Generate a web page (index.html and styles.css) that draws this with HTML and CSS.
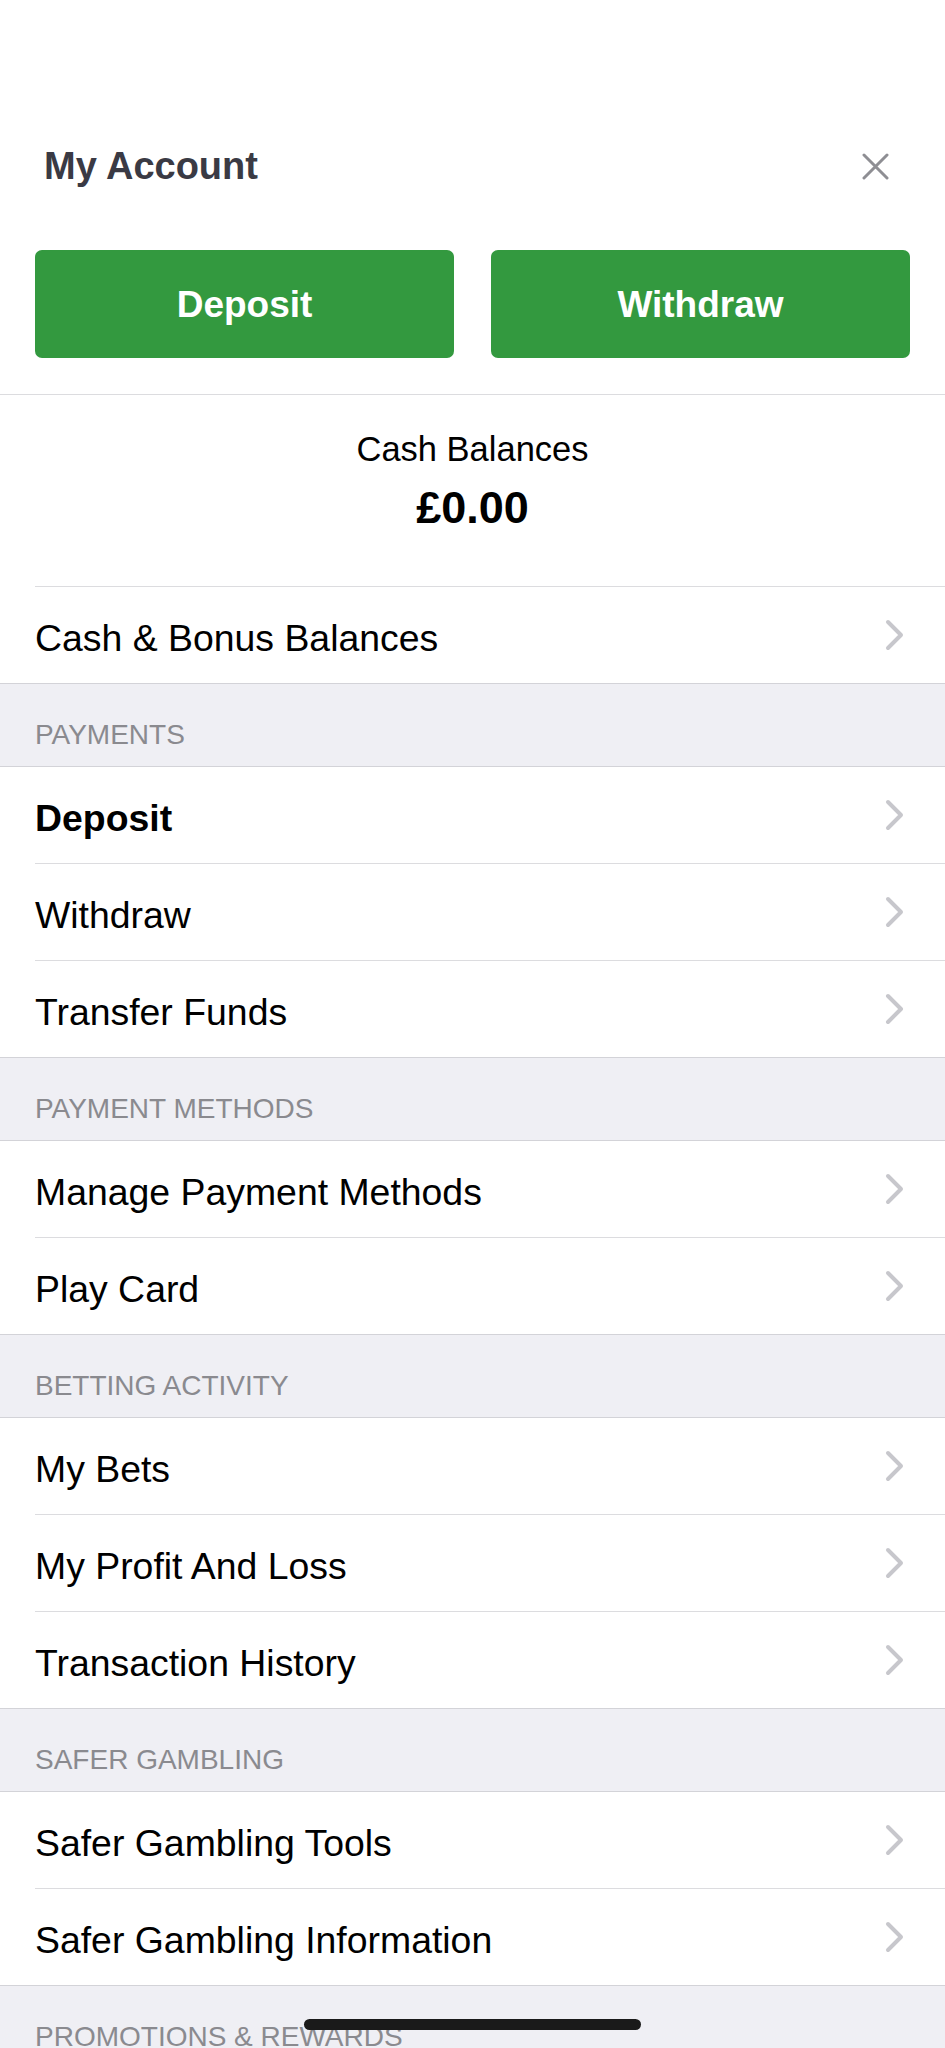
FILE: index.html
```html
<!DOCTYPE html>
<html lang="en">
<head>
<meta charset="utf-8">
<title>My Account</title>
<link rel="stylesheet" href="styles.css">
</head>
<body>
<div class="screen">
  <header class="top">
    <h1 class="title">My Account</h1>
    <svg class="close" width="27" height="27" viewBox="0 0 27 27" aria-label="Close"><path d="M2 2 L25 25 M25 2 L2 25" stroke="#8e8e93" stroke-width="3" stroke-linecap="round" fill="none"/></svg>
  </header>
  <div class="actions">
    <button class="btn">Deposit</button>
    <button class="btn">Withdraw</button>
  </div>
  <section class="balance">
    <div class="balance-label">Cash Balances</div>
    <div class="balance-value">£0.00</div>
  </section>
  <div class="item item-top"><span>Cash &amp; Bonus Balances</span><svg class="chev" width="20" height="32" viewBox="0 0 20 32"><path d="M3 3 L16 16 L3 29" stroke="#c7c7cc" stroke-width="4" stroke-linecap="round" stroke-linejoin="round" fill="none"/></svg></div>

  <div class="section">PAYMENTS</div>
  <div class="item"><span class="strong">Deposit</span><svg class="chev" width="20" height="32" viewBox="0 0 20 32"><path d="M3 3 L16 16 L3 29" stroke="#c7c7cc" stroke-width="4" stroke-linecap="round" stroke-linejoin="round" fill="none"/></svg></div>
  <div class="item"><span>Withdraw</span><svg class="chev" width="20" height="32" viewBox="0 0 20 32"><path d="M3 3 L16 16 L3 29" stroke="#c7c7cc" stroke-width="4" stroke-linecap="round" stroke-linejoin="round" fill="none"/></svg></div>
  <div class="item"><span>Transfer Funds</span><svg class="chev" width="20" height="32" viewBox="0 0 20 32"><path d="M3 3 L16 16 L3 29" stroke="#c7c7cc" stroke-width="4" stroke-linecap="round" stroke-linejoin="round" fill="none"/></svg></div>

  <div class="section">PAYMENT METHODS</div>
  <div class="item"><span>Manage Payment Methods</span><svg class="chev" width="20" height="32" viewBox="0 0 20 32"><path d="M3 3 L16 16 L3 29" stroke="#c7c7cc" stroke-width="4" stroke-linecap="round" stroke-linejoin="round" fill="none"/></svg></div>
  <div class="item"><span>Play Card</span><svg class="chev" width="20" height="32" viewBox="0 0 20 32"><path d="M3 3 L16 16 L3 29" stroke="#c7c7cc" stroke-width="4" stroke-linecap="round" stroke-linejoin="round" fill="none"/></svg></div>

  <div class="section">BETTING ACTIVITY</div>
  <div class="item"><span>My Bets</span><svg class="chev" width="20" height="32" viewBox="0 0 20 32"><path d="M3 3 L16 16 L3 29" stroke="#c7c7cc" stroke-width="4" stroke-linecap="round" stroke-linejoin="round" fill="none"/></svg></div>
  <div class="item"><span>My Profit And Loss</span><svg class="chev" width="20" height="32" viewBox="0 0 20 32"><path d="M3 3 L16 16 L3 29" stroke="#c7c7cc" stroke-width="4" stroke-linecap="round" stroke-linejoin="round" fill="none"/></svg></div>
  <div class="item"><span>Transaction History</span><svg class="chev" width="20" height="32" viewBox="0 0 20 32"><path d="M3 3 L16 16 L3 29" stroke="#c7c7cc" stroke-width="4" stroke-linecap="round" stroke-linejoin="round" fill="none"/></svg></div>

  <div class="section">SAFER GAMBLING</div>
  <div class="item"><span>Safer Gambling Tools</span><svg class="chev" width="20" height="32" viewBox="0 0 20 32"><path d="M3 3 L16 16 L3 29" stroke="#c7c7cc" stroke-width="4" stroke-linecap="round" stroke-linejoin="round" fill="none"/></svg></div>
  <div class="item"><span>Safer Gambling Information</span><svg class="chev" width="20" height="32" viewBox="0 0 20 32"><path d="M3 3 L16 16 L3 29" stroke="#c7c7cc" stroke-width="4" stroke-linecap="round" stroke-linejoin="round" fill="none"/></svg></div>

  <div class="section">PROMOTIONS &amp; REWARDS</div>
  <div class="item"><span>Promotions</span><svg class="chev" width="20" height="32" viewBox="0 0 20 32"><path d="M3 3 L16 16 L3 29" stroke="#c7c7cc" stroke-width="4" stroke-linecap="round" stroke-linejoin="round" fill="none"/></svg></div>

  <div class="home-indicator"></div>
</div>
</body>
</html>
```
FILE: styles.css
```css
* { box-sizing: border-box; }
html, body { margin: 0; padding: 0; background: #fff; }
body { font-family: "Liberation Sans", Arial, sans-serif; color: #000; }

.screen {
  position: relative;
  width: 945px;
  height: 2048px;
  overflow: hidden;
  background: #fff;
}

.top {
  display: flex;
  align-items: center;
  justify-content: space-between;
  padding: 144px 56px 0 44px;
}
.title {
  margin: 0;
  font-size: 38px;
  line-height: 44px;
  font-weight: 700;
  color: #3a3a44;
}
.close { display: block; }

.actions {
  display: flex;
  gap: 37px;
  padding: 0 35px;
  margin-top: 62px;
}
.btn {
  flex: 1;
  height: 108px;
  border: 0;
  border-radius: 7px;
  background: #33993f;
  color: #fff;
  font-family: "Liberation Sans", Arial, sans-serif;
  font-size: 37px;
  line-height: 44px;
  font-weight: 700;
  padding: 2px 0 0;
}

.balance {
  margin-top: 36px;
  border-top: 1px solid #dcdcdf;
  padding: 34px 0 53px;
  text-align: center;
}
.balance-label {
  font-size: 34.5px;
  line-height: 40px;
}
.balance-value {
  margin-top: 13px;
  font-size: 45px;
  line-height: 51px;
  font-weight: 700;
}

.item {
  display: flex;
  align-items: center;
  justify-content: space-between;
  margin-left: 35px;
  height: 96px;
  padding: 5px 40px 0 0;
  font-size: 37.4px;
  line-height: 44px;
}
.item .chev { margin-top: -5px; }
.item + .item { border-top: 1px solid #dcdcdf; height: 97px; }
.item-top { border-top: 1px solid #dcdcdf; height: 97px; }
.strong { font-weight: 700; }

.section {
  display: flex;
  align-items: flex-end;
  height: 84px;
  padding: 0 35px 15px;
  background: #efeff4;
  border-top: 1px solid #d3d3d8;
  border-bottom: 1px solid #d3d3d8;
  color: #8a8a8f;
  font-size: 28px;
  line-height: 32px;
}

.home-indicator {
  position: absolute;
  left: 304px;
  top: 2019px;
  width: 337px;
  height: 11px;
  border-radius: 6px;
  background: #1a1a1a;
}
```
